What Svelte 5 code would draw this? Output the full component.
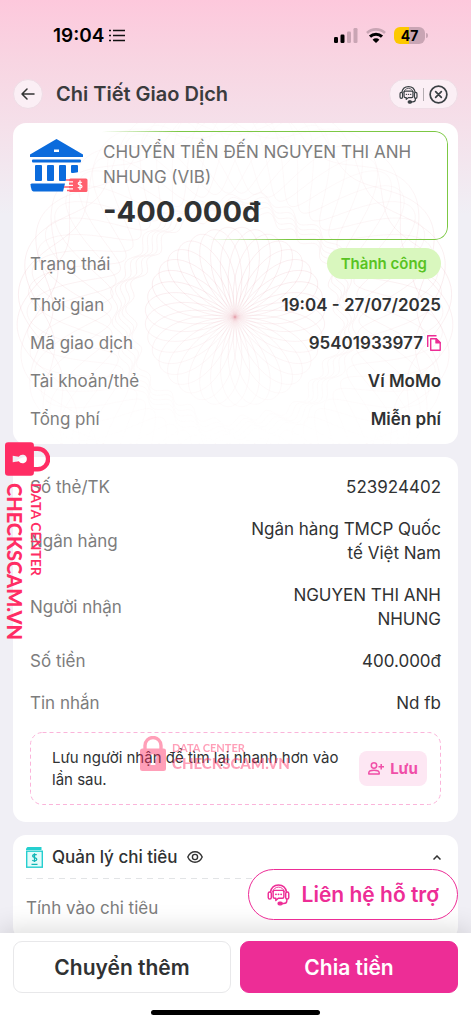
<script>
  const summary = [
    { label: 'Thời gian', value: '19:04 - 27/07/2025' },
    { label: 'Mã giao dịch', value: '95401933977', copy: true },
    { label: 'Tài khoản/thẻ', value: 'Ví MoMo' },
    { label: 'Tổng phí', value: 'Miễn phí' },
  ];

  const details = [
    { label: 'Số thẻ/TK', value: '523924402' },
    { label: 'Ngân hàng', value: 'Ngân hàng TMCP Quốc tế Việt Nam' },
    { label: 'Người nhận', value: 'NGUYEN THI ANH NHUNG' },
    { label: 'Số tiền', value: '400.000đ' },
    { label: 'Tin nhắn', value: 'Nd fb' },
  ];

  // Closed polar curve as an SVG path; r is a function of the angle.
  function polar(r, turns, steps) {
    let d = '';
    for (let i = 0; i <= steps; i++) {
      const t = (i / steps) * Math.PI * 2 * turns;
      const k = r(t);
      d += `${i ? 'L' : 'M'}${(k * Math.cos(t)).toFixed(1)} ${(k * Math.sin(t)).toFixed(1)}`;
    }
    return d;
  }

  const rose = polar((t) => 90 * Math.sin((18 / 7) * t), 7, 1600);
  const waves = [0, 1, 2, 3, 4].map((i) =>
    polar((t) => 104 + i * 4 + 4 * Math.sin(24 * t + i * 0.7) + 3 * Math.sin(8 * t), 1, 500)
  );
  const weave = polar((t) => 166 + 42 * Math.sin((61 / 7) * t), 7, 3600);
  const rim = polar((t) => 200 + 18 * Math.sin((37 / 5) * t), 5, 1800);
</script>

{#snippet headset()}
  <svg viewBox="0 0 24 24" fill="none" stroke="currentColor" stroke-width="1.5" stroke-linecap="round" stroke-linejoin="round" aria-hidden="true">
    <path d="M3.6 9.4C4.4 4.9 7.800 2 12 2s7.600 2.900 8.400 7.400" />
    <path d="M5.800 9.200C6.500 6.200 9 4.300 12 4.300s5.500 1.900 6.200 4.900" stroke-width="1" />
    <rect x="1.300" y="9.400" width="3.200" height="7.400" rx="1.600" />
    <rect x="19.500" y="9.400" width="3.200" height="7.400" rx="1.600" />
    <path d="M8 7.700h8a1.600 1.600 0 0 1 1.600 1.600v5a1.600 1.600 0 0 1-1.600 1.600h-4.200l-2.600 2.300v-2.300H8a1.600 1.600 0 0 1-1.600-1.600v-5A1.600 1.600 0 0 1 8 7.700z" />
    <path d="M9.300 11.800h.1M12 11.800h.1M14.700 11.800h.1" stroke-width="1.800" />
    <path d="M20.700 17v1.400c0 1.800-1.500 3-3.400 3h-2" />
    <rect x="11.600" y="20" width="4.200" height="2.800" rx="1.400" fill="currentColor" />
  </svg>
{/snippet}

{#snippet lock()}
  <svg viewBox="0 0 26 35" aria-hidden="true">
    <path d="M5 15V9.500a8 8 0 0 1 16 0V15" fill="none" stroke="currentColor" stroke-width="3.400" />
    <path fill="currentColor" fill-rule="evenodd" d="M2.500 12.500h21A2.500 2.500 0 0 1 26 15v17.500a2.500 2.500 0 0 1-2.500 2.500h-21A2.500 2.500 0 0 1 0 32.500V15a2.500 2.500 0 0 1 2.500-2.500zM13 18a3.400 3.400 0 0 0-1.700 6.300L10.500 29h5l-.8-4.700A3.400 3.400 0 0 0 13 18z" />
  </svg>
{/snippet}

<div class="screen">
  <div class="scroll">
    <div class="status">
      <div class="clock">
        19:04
        <svg width="16" height="13" viewBox="0 0 16 13" stroke="#111" stroke-width="1.600" aria-hidden="true">
          <path d="M0 1.500h2M4 1.500h12M0 6.500h2M4 6.500h12M0 11.500h2M4 11.500h12" />
        </svg>
      </div>
      <div class="signals">
        <svg width="24" height="15" viewBox="0 0 24 15" aria-hidden="true">
          <rect x="0" y="9" width="4" height="6" rx="1.200" />
          <rect x="6.500" y="6.500" width="4" height="8.500" rx="1.200" />
          <rect x="13" y="3.500" width="4" height="11.500" rx="1.200" fill="#c9a5b4" />
          <rect x="19.500" y="0" width="4" height="15" rx="1.200" fill="#c9a5b4" />
        </svg>
        <svg width="20" height="15" viewBox="0 0 20 15" fill="none" aria-hidden="true">
          <path d="M1 5a13 13 0 0 1 18 0" stroke="#c9a5b4" stroke-width="2.600" />
          <path d="M4 8.600a8.600 8.600 0 0 1 12 0" stroke="#000" stroke-width="3" />
          <path d="M6.600 11.700a4.800 4.800 0 0 1 6.800 0L10 15z" fill="#000" />
        </svg>
        <div class="battery"><span>47</span></div>
      </div>
    </div>

    <header>
      <button class="back" aria-label="Quay lại">
        <svg width="14" height="12" viewBox="0 0 14 12" fill="none" stroke="#333" stroke-width="1.500" stroke-linecap="round" stroke-linejoin="round"><path d="M13 6H1M6 1 1 6l5 5" /></svg>
      </button>
      <h1>Chi Tiết Giao Dịch</h1>
      <div class="capsule">
        <button aria-label="Hỗ trợ">{@render headset()}</button>
        <i></i>
        <button aria-label="Đóng">
          <svg viewBox="0 0 20 20" fill="none" stroke="currentColor" stroke-width="1.800" stroke-linecap="round"><circle cx="10" cy="10" r="8.800" /><path d="m7 7 6 6M13 7l-6 6" /></svg>
        </button>
      </div>
    </header>

    <main>
      <section class="card receipt">
        <svg class="guilloche" viewBox="-222 -194 445 321" preserveAspectRatio="xMidYMid slice" fill="none" stroke="#dc8f98" stroke-width="0.800" aria-hidden="true">
          <defs>
            <linearGradient id="fade" x1="0" y1="0" x2="0" y2="1">
              <stop offset="0" stop-color="#fff" stop-opacity="0.200" />
              <stop offset="0.500" stop-color="#fff" />
              <stop offset="1" stop-color="#fff" stop-opacity="0" />
            </linearGradient>
            <mask id="veil" maskUnits="userSpaceOnUse" x="-222" y="-194" width="445" height="321">
              <rect x="-222" y="-194" width="445" height="321" fill="url(#fade)" />
            </mask>
          </defs>
          <g mask="url(#veil)">
            <path d={rose} opacity="0.200" />
            {#each waves as d}<path {d} opacity="0.150" />{/each}
            <path d={weave} opacity="0.150" />
            <path d={rim} opacity="0.200" />
          </g>
        </svg>

        <div class="hero">
          <svg class="bank" viewBox="0 0 58 54" aria-hidden="true">
            <g fill="#0b6bdc">
              <path fill-rule="evenodd" d="M26.500 0 53 15.500V18H0v-2.500zM24 10.500v2.500h5v-2.500z" />
              <rect x="2" y="20.500" width="49" height="3" rx="1" />
              <rect x="5" y="26" width="7" height="16" rx="1" />
              <rect x="17" y="26" width="7" height="16" rx="1" />
              <rect x="29" y="26" width="7" height="16" rx="1" />
              <rect x="41" y="26" width="7" height="8" rx="1" />
              <path d="M2 44.500h33L33 52.500H3.500Q1 52 .5 45.500 1 44.500 2 44.500z" />
            </g>
            <path d="M36 53V35l14-2v6l8 .5V53z" fill="#fff" />
            <rect x="39" y="39.500" width="18.500" height="13.500" rx="1.500" fill="#ff5f6d" />
            <path d="M36 41h8M39 44.500h5M34 48h9M37 51.500h7" stroke="#ff5f6d" stroke-width="1.400" />
            <path d="M39 42.800h4M38 46.300h5M39 49.800h4" stroke="#fff" stroke-width="1.200" />
            <path d="M51.800 43.600c-.6-.8-3.600-1-3.600.9s3.800 1 3.800 2.900-3.300 1.900-4.100.7M50 41.300v9.600" fill="none" stroke="#fff" stroke-width="1.200" />
          </svg>
          <div class="frame">
            <p>CHUYỂN TIỀN ĐẾN NGUYEN THI ANH NHUNG (VIB)</p>
            <strong>-400.000đ</strong>
          </div>
        </div>

        <dl class="summary">
          <div><dt>Trạng thái</dt><dd class="pill">Thành công</dd></div>
          {#each summary as row}
            <div>
              <dt>{row.label}</dt>
              <dd>
                {row.value}
                {#if row.copy}
                  <button class="copy" aria-label="Sao chép">
                    <svg width="14" height="16" viewBox="0 0 14 16" fill="none" stroke="#ed2d96" stroke-width="1.400" stroke-linejoin="round"><path d="M.7 12V.7H9.500" /><path d="M3.700 3.700h5.600l3.900 3.900v7.700H3.700z" /><path d="M9 3.700v4.200h4.200z" fill="#ed2d96" /></svg>
                  </button>
                {/if}
              </dd>
            </div>
          {/each}
        </dl>
      </section>

      <section class="card transfer">
        <dl class="details">
          {#each details as row}
            <div><dt>{row.label}</dt><dd>{row.value}</dd></div>
          {/each}
        </dl>
        <div class="save">
          <svg class="dash" aria-hidden="true"><rect x="0.500" y="0.500" rx="12" /></svg>
          <p>Lưu người nhận để tìm lại nhanh hơn vào lần sau.</p>
          <button>
            <svg width="16" height="13" viewBox="0 0 16 13" fill="none" stroke="currentColor" stroke-width="1.500" stroke-linejoin="round" aria-hidden="true"><circle cx="6" cy="3.500" r="2.700" /><path d="M.8 12v-1.200C.8 9 3.500 8.200 6 8.200s5.200.8 5.200 2.600V12zM10.500 4.800H16M13.200 2v5.600" /></svg>
            Lưu
          </button>
          <div class="mark flat">
            {@render lock()}
            <div><small>DATA CENTER</small><b>CHECKSCAM.VN</b></div>
          </div>
        </div>
        <div class="mark upright">
          {@render lock()}
          <div><small>DATA CENTER</small><b>CHECKSCAM.VN</b></div>
        </div>
      </section>

      <section class="card spending">
        <div class="head">
          <svg width="17" height="21" viewBox="0 0 17 21" aria-hidden="true">
            <path d="M1.500 0H15.500v3H0V1.500z" fill="#25cfcf" />
            <rect x="0.700" y="4.200" width="15.600" height="16" fill="#e3fbfa" stroke="#25cfcf" stroke-width="1.400" />
            <path d="M10.600 8.200c-.7-1.100-4-1.100-4 .9s4.200 1.200 4.200 3.200-3.500 2-4.500.8M8.500 6.200v8.800M5.500 17.300h6" fill="none" stroke="#12b5b5" stroke-width="1.300" />
          </svg>
          <h2>Quản lý chi tiêu</h2>
          <button aria-label="Ẩn số tiền">
            <svg width="16" height="12" viewBox="0 0 16 12" fill="none" stroke="#333" stroke-width="1.400"><path d="M.8 6C2.300 2.600 4.900.8 8 .8s5.700 1.800 7.200 5.200c-1.500 3.400-4.100 5.200-7.200 5.200S2.300 9.400.8 6z" /><circle cx="8" cy="6" r="2.600" /></svg>
          </button>
          <button class="fold" aria-label="Thu gọn">
            <svg width="8" height="5" viewBox="0 0 8 5" fill="none" stroke="#333" stroke-width="1.500"><path d="m.5 4.500 3.500-3.500 3.500 3.500" /></svg>
          </button>
        </div>
        <p>Tính vào chi tiêu</p>
      </section>
    </main>
  </div>

  <footer>
    <button class="help">{@render headset()}Liên hệ hỗ trợ</button>
    <div class="actions">
      <button>Chuyển thêm</button>
      <button class="primary">Chia tiền</button>
    </div>
    <div class="home"></div>
  </footer>
</div>

<style>
  :global(body) {
    font-family: Inter, "Liberation Sans", sans-serif;
    color: #303233;
    background: #f0eff5;
  }
  .screen {
    height: 100vh;
    display: flex;
    flex-direction: column;
    background: linear-gradient(#fdc8dc 0, #f8d5e2 60px, #f5e0ea 125px, #f0eff5 215px);
  }
  .screen * { box-sizing: border-box; }
  button {
    font: inherit;
    color: inherit;
    background: none;
    border: 0;
    padding: 0;
    display: flex;
    align-items: center;
    justify-content: center;
    cursor: pointer;
  }
  h1, h2, p, dl, dd { margin: 0; }
  svg { display: block; flex: none; }
  .scroll {
    flex: 1;
    min-height: 0;
    overflow-y: auto;
    scrollbar-width: none;
  }

  .status {
    display: flex;
    justify-content: space-between;
    align-items: center;
    height: 70px;
    padding: 0 46px 0 53px;
    color: #000;
  }
  .clock {
    display: flex;
    align-items: center;
    gap: 5px;
    font-size: 19px;
    font-weight: 600;
  }
  .signals { display: flex; align-items: center; gap: 8px; }
  .battery {
    position: relative;
    width: 31px;
    height: 17px;
    border-radius: 6px;
    background: linear-gradient(90deg, #fcc800 47%, #c9a5b4 47%);
    font-size: 14px;
    font-weight: 700;
    line-height: 17px;
    text-align: center;
  }
  .battery::after {
    content: "";
    position: absolute;
    left: 32px;
    top: 6px;
    width: 2px;
    height: 5px;
    border-radius: 0 2px 2px 0;
    background: #c9a5b4;
  }

  header {
    display: flex;
    align-items: center;
    height: 48px;
    padding: 0 13px;
  }
  .back {
    width: 30px;
    height: 30px;
    border-radius: 50%;
    background: #fbeff5;
    border: 1px solid #efdde6;
  }
  h1 {
    flex: 1;
    margin-left: 13px;
    font-size: 20px;
    font-weight: 600;
    color: #3a3b3d;
  }
  .capsule {
    display: flex;
    align-items: center;
    gap: 5px;
    height: 30px;
    padding: 0 9px;
    border-radius: 15px;
    background: #fbeff5;
    border: 1px solid #efdde6;
    color: #3a4044;
  }
  .capsule svg { width: 19px; height: 19px; }
  .capsule i { width: 1px; height: 13px; background: #b5adb2; }

  main {
    display: flex;
    flex-direction: column;
    gap: 13px;
    padding: 5px 13px 0;
  }
  .card {
    position: relative;
    border-radius: 13px;
    background: #fff;
  }

  .receipt { padding: 8px 10px 13px 17px; }
  .guilloche {
    position: absolute;
    inset: 0;
    width: 100%;
    height: 100%;
    border-radius: 13px;
  }
  .hero { position: relative; display: flex; }
  .bank { width: 58px; height: 54px; margin-top: 8px; }
  .frame {
    position: relative;
    flex: 1;
    margin-left: 5px;
    padding: 9px 10px 10px;
    height: 109px;
  }
  .frame::before {
    content: "";
    position: absolute;
    inset: 0;
    padding: 1px;
    border-radius: 13px;
    background: linear-gradient(45deg, transparent 25%, #7cc844 42%);
    mask: linear-gradient(#000 0 0) content-box exclude, linear-gradient(#000 0 0);
  }
  .frame p { font-size: 17px; line-height: 25px; color: #7d7d7d; }
  .frame strong {
    display: block;
    font-size: 29px;
    line-height: 44px;
    font-weight: 700;
  }

  dl { position: relative; display: flex; flex-direction: column; font-size: 17px; line-height: 24px; }
  dl > div { display: flex; justify-content: space-between; align-items: center; }
  dt { color: #7d7d7d; }
  .summary { gap: 14px; padding: 8px 7px 0 0; }
  .summary dd { display: flex; align-items: center; gap: 4px; font-weight: 600; }
  .summary .pill {
    height: 31px;
    padding: 0 14px;
    border-radius: 16px;
    background: #d9f7be;
    color: #58c322;
    font-size: 15px;
  }

  .transfer { padding: 18px 17px 17px; }
  .details { gap: 18px; }
  .details dd { max-width: 200px; text-align: right; }

  .save {
    position: relative;
    display: flex;
    align-items: center;
    gap: 12px;
    height: 73px;
    margin-top: 17px;
    padding: 0 14px 0 22px;
  }
  .dash { position: absolute; inset: 0; width: 100%; height: 100%; }
  .dash rect {
    width: calc(100% - 1px);
    height: calc(100% - 1px);
    fill: none;
    stroke: #fbb4da;
    stroke-dasharray: 4 3;
  }
  .save p { flex: 1; font-size: 15px; line-height: 22px; }
  .save button {
    gap: 6px;
    width: 68px;
    height: 35px;
    border-radius: 8px;
    background: #fde7f3;
    color: #f04fa8;
    font-size: 15px;
    font-weight: 700;
  }

  .mark {
    position: absolute;
    display: flex;
    color: #ff2d64;
    font-family: Lato, "Open Sans", sans-serif;
    pointer-events: none;
  }
  .mark div { display: flex; flex-direction: column; white-space: nowrap; }
  .mark small { font-weight: 700; }
  .mark b { font-weight: 900; }
  .flat { left: 110px; top: 4px; gap: 6px; opacity: 0.45; }
  .flat svg { width: 26px; height: 35px; }
  .flat div { padding-top: 6px; }
  .flat small { font-size: 11px; line-height: 12px; }
  .flat b { font-size: 15px; line-height: 18px; }
  .upright {
    left: 37px;
    top: -15px;
    gap: 7px;
    transform: rotate(90deg);
    transform-origin: 0 0;
  }
  .upright svg { width: 34px; height: 45px; }
  .upright div { padding-top: 7px; gap: 4px; }
  .upright small { font-size: 14px; line-height: 14px; }
  .upright b { font-size: 20px; line-height: 20px; }

  .spending { padding: 0 13px 20px; }
  .head {
    display: flex;
    align-items: center;
    gap: 9px;
    height: 44px;
    background: repeating-linear-gradient(90deg, #e2e4e6 0 6px, transparent 6px 11px) bottom / 100% 1px no-repeat;
  }
  h2 { font-size: 17px; font-weight: 500; }
  .fold { margin-left: auto; padding: 4px; }
  .spending p { padding-top: 17px; font-size: 17px; line-height: 24px; color: #7d7d7d; }

  footer {
    position: relative;
    background: #fff;
    padding: 8px 13px;
    box-shadow: 0 -4px 24px rgba(0, 0, 0, 0.14);
  }
  .help {
    position: absolute;
    right: 13px;
    bottom: calc(100% + 13px);
    gap: 12px;
    height: 51px;
    padding: 0 18px;
    border: 1px solid #ed2d96;
    border-radius: 26px;
    background: #fff;
    color: #ed2d96;
    font-size: 21px;
    font-weight: 600;
    white-space: nowrap;
  }
  .help svg { width: 23px; height: 23px; }
  .actions { display: grid; grid-template-columns: 1fr 1fr; gap: 9px; }
  .actions button {
    height: 52px;
    border: 1px solid #e8e8ea;
    border-radius: 9px;
    font-size: 21px;
    font-weight: 600;
  }
  .actions .primary { background: #ed2d96; border-color: #ed2d96; color: #fff; }
  .home {
    width: 169px;
    height: 5px;
    margin: 17px auto 1px;
    border-radius: 3px;
    background: #000;
  }
</style>
